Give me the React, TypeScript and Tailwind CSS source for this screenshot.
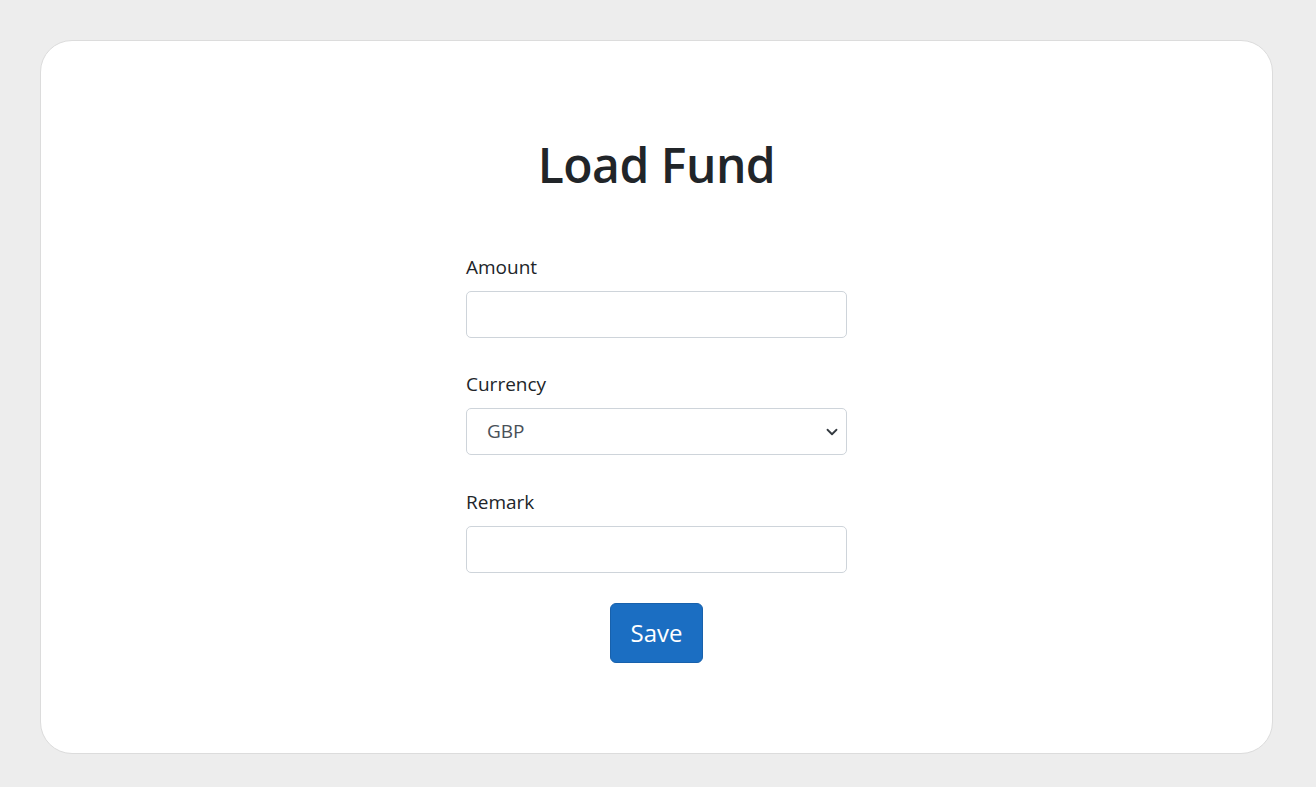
import React from "react";

export default function App() {
  return (
    <div
      className="w-[1316px] h-[787px] bg-[#ededed] pt-[40px] px-[40px] overflow-hidden"
      style={{ fontFamily: '"Open Sans", "Noto Sans", sans-serif' }}
    >
      <div className="w-[1233px] h-[714px] bg-white border border-[#dcdcdc] rounded-[32px] flex flex-col items-center">
        <h1 className="mt-[96px] text-[48px] leading-[56px] font-semibold text-[#212529] tracking-[-0.5px]">
          Load Fund
        </h1>
        <div className="w-[381px] mt-[59px] flex flex-col">
          <label className="text-[19px] leading-[30px] text-[#212529] mb-[9px]">Amount</label>
          <input
            type="text"
            className="h-[47px] w-full border border-[#ced4da] rounded-[5px] px-[15px] text-[19px] outline-none"
          />
          <label className="mt-[31px] text-[19px] leading-[30px] text-[#212529] mb-[9px]">Currency</label>
          <div className="relative h-[47px] w-full border border-[#ced4da] rounded-[5px] flex items-center pl-[20px]">
            <span className="text-[19px] text-[#495057]">GBP</span>
            <svg
              className="absolute right-[8px] top-1/2 -translate-y-1/2"
              width="12"
              height="12"
              viewBox="0 0 16 16"
            >
              <path d="M2 5l6 6 6-6" fill="none" stroke="#343a40" strokeWidth="2.4" strokeLinecap="round" strokeLinejoin="round" />
            </svg>
          </div>
          <label className="mt-[32px] text-[19px] leading-[30px] text-[#212529] mb-[9px]">Remark</label>
          <input
            type="text"
            className="h-[47px] w-full border border-[#ced4da] rounded-[5px] px-[15px] text-[19px] outline-none"
          />
          <div className="flex justify-center mt-[30px]">
            <button className="w-[93px] h-[60px] bg-[#1b6ec2] border border-[#1861ac] rounded-[6px] text-white text-[24px]">
              Save
            </button>
          </div>
        </div>
      </div>
    </div>
  );
}
